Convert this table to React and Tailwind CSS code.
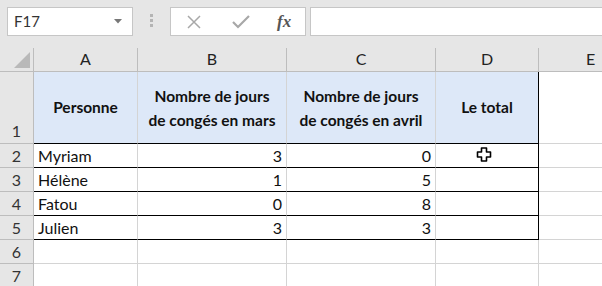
import React from 'react';

const cols = [
  { key: 'A', w: 'w-[104px]' },
  { key: 'B', w: 'w-[149px]' },
  { key: 'C', w: 'w-[149px]' },
  { key: 'D', w: 'w-[103px]' },
  { key: 'E', w: 'w-[104px]' },
];

const people = [
  { name: 'Myriam', mars: 3, avril: 0 },
  { name: 'Hélène', mars: 1, avril: 5 },
  { name: 'Fatou', mars: 0, avril: 8 },
  { name: 'Julien', mars: 3, avril: 3 },
];

function CrossCursor() {
  return (
    <svg width="16" height="15" viewBox="0 0 16 15" className="absolute left-[476px] top-[147px]">
      <path
        d="M5.5 1h5v4h4v5h-4v4h-5v-4h-4v-5h4z"
        fill="#fff"
        stroke="#000"
        strokeWidth="1.6"
        strokeLinejoin="round"
      />
    </svg>
  );
}

function FormulaBar() {
  return (
    <div className="flex h-[48px] items-start bg-[#e6e6e6] pt-[7px]">
      <div className="ml-[7px] flex h-[29px] w-[126px] items-center justify-between border border-[#c6c6c6] bg-white pl-[6px] pr-[10px]">
        <span className="text-[15px] text-[#333]">F17</span>
        <svg width="8" height="5" viewBox="0 0 8 5">
          <path d="M0 0h8L4 4.5z" fill="#777" />
        </svg>
      </div>
      <div className="ml-[17px] mt-[7px] flex flex-col gap-[2px]">
        <span className="block h-[3px] w-[3px] bg-[#b4b4b4]" />
        <span className="block h-[3px] w-[3px] bg-[#b4b4b4]" />
        <span className="block h-[3px] w-[3px] bg-[#b4b4b4]" />
      </div>
      <div className="ml-[17px] flex h-[29px] w-[136px] items-center border border-[#c6c6c6] bg-white">
        <svg width="14" height="14" viewBox="0 0 14 14" className="ml-[16px]">
          <path d="M1 1l12 12M13 1L1 13" stroke="#a8a8a8" strokeWidth="1.5" />
        </svg>
        <svg width="18" height="14" viewBox="0 0 18 14" className="ml-[31px]">
          <path d="M1 7l5 5L17 1" stroke="#a8a8a8" strokeWidth="2.2" fill="none" />
        </svg>
        <span className="ml-[27px] font-['Liberation_Serif',serif] text-[17px] font-bold italic text-[#555]">
          fx
        </span>
      </div>
      <div className="ml-[4px] h-[29px] flex-1 border border-r-0 border-[#c6c6c6] bg-white" />
    </div>
  );
}

export default function App() {
  const rowHead = 'w-[34px] shrink-0 border-r border-b border-[#bdbdbd] bg-[#e6e6e6] text-center text-[#333]';
  const grid = 'border-r border-b border-[#d4d4d4]';

  return (
    <div className="relative h-[286px] w-[602px] overflow-hidden bg-white font-['Lato',sans-serif] text-[16px]">
      <FormulaBar />

      <div className="w-[700px]">
        {/* column letters */}
        <div className="flex h-[24px] bg-[#e6e6e6]">
          <div className="relative w-[34px] shrink-0 border-r border-b border-[#bdbdbd]">
            <svg width="16" height="16" viewBox="0 0 16 16" className="absolute right-[3px] bottom-[3px]">
              <path d="M16 0V16H0z" fill="#b9b9b9" />
            </svg>
          </div>
          {cols.map((c) => (
            <div
              key={c.key}
              className={`${c.w} flex shrink-0 items-end justify-center border-r border-b border-[#bdbdbd] text-[#222]`}
            >
              {c.key}
            </div>
          ))}
        </div>

        {/* row 1: headings */}
        <div className="flex h-[72px] text-[15.5px]">
          <div className={`${rowHead} flex items-end justify-center text-[16px]`}>1</div>
          <div className="flex w-[104px] shrink-0 items-center justify-center border-r border-b border-r-[#d4d4d4] border-b-black bg-[#dde8f8] font-bold text-[#111]">
            Personne
          </div>
          <div className="flex w-[149px] shrink-0 items-center justify-center border-r border-b border-r-[#d4d4d4] border-b-black bg-[#dde8f8] text-center font-bold leading-[24px] text-[#111]">
            Nombre de jours
            <br />
            de congés en mars
          </div>
          <div className="flex w-[149px] shrink-0 items-center justify-center border-r border-b border-r-[#d4d4d4] border-b-black bg-[#dde8f8] text-center font-bold leading-[24px] text-[#111]">
            Nombre de jours
            <br />
            de congés en avril
          </div>
          <div className="flex w-[103px] shrink-0 items-center justify-center border-r border-b border-black bg-[#dde8f8] font-bold text-[#111]">
            Le total
          </div>
          <div className={`w-[104px] shrink-0 ${grid}`} />
        </div>

        {/* rows 2-5: data */}
        {people.map((p, i) => (
          <div key={p.name} className="flex h-[24px]">
            <div className={`${rowHead} leading-[23px]`}>{i + 2}</div>
            <div className="w-[104px] shrink-0 border-r border-b border-r-[#d4d4d4] border-b-black pl-[4px] leading-[23px] text-[#111]">
              {p.name}
            </div>
            <div className="w-[149px] shrink-0 border-r border-b border-r-[#d4d4d4] border-b-black pr-[4px] text-right leading-[23px] text-[#111]">
              {p.mars}
            </div>
            <div className="w-[149px] shrink-0 border-r border-b border-r-[#d4d4d4] border-b-black pr-[4px] text-right leading-[23px] text-[#111]">
              {p.avril}
            </div>
            <div className="w-[103px] shrink-0 border-r border-b border-black" />
            <div className={`w-[104px] shrink-0 ${grid}`} />
          </div>
        ))}

        {/* rows 6-7: empty */}
        {[6, 7].map((n) => (
          <div key={n} className="flex h-[24px]">
            <div className={`${rowHead} leading-[23px]`}>{n}</div>
            {cols.map((c) => (
              <div key={c.key} className={`${c.w} shrink-0 ${grid}`} />
            ))}
          </div>
        ))}
      </div>

      <CrossCursor />
    </div>
  );
}
